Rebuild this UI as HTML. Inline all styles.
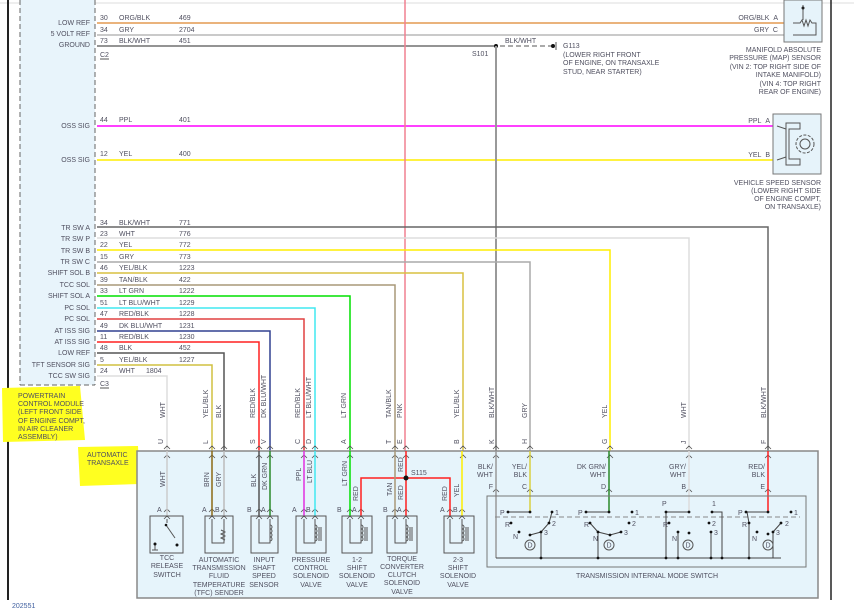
<!DOCTYPE html>
<html><head><meta charset="utf-8"><style>
html,body{margin:0;padding:0;background:#fff;width:854px;height:610px;overflow:hidden}
svg{display:block}
text{font-family:"Liberation Sans",sans-serif;font-size:7px;fill:#505060}
</style></head><body>
<svg width="854" height="610" viewBox="0 0 854 610" xmlns="http://www.w3.org/2000/svg">
<!-- frame -->
<line x1="0" y1="3" x2="854" y2="3" stroke="#ddd"/>
<line x1="8" y1="0" x2="8" y2="600" stroke="#222" stroke-width="2"/>
<line x1="831" y1="0" x2="831" y2="600" stroke="#222" stroke-width="1.5"/>
<!-- PCM box -->
<rect x="20" y="0" width="75" height="385" fill="#e8f4fb"/>
<line x1="20" y1="0" x2="20" y2="385" stroke="#666" stroke-dasharray="5,3"/>
<line x1="95" y1="0" x2="95" y2="385" stroke="#666" stroke-dasharray="5,3"/>
<line x1="20" y1="385" x2="95" y2="385" stroke="#666" stroke-dasharray="5,3"/>
<!-- highlights -->
<path d="M2 388 L80 386 L85 440 L3 442 Z" fill="#ffff20"/>
<path d="M78 447 L138 446 L140 484 L80 486 Z" fill="#ffff20"/>
<text x="18" y="398">POWERTRAIN</text>
<text x="18" y="406">CONTROL MODULE</text>
<text x="18" y="414">(LEFT FRONT SIDE</text>
<text x="18" y="423">OF ENGINE COMPT,</text>
<text x="18" y="431">IN AIR CLEANER</text>
<text x="18" y="439">ASSEMBLY)</text>
<text x="87" y="457">AUTOMATIC</text>
<text x="87" y="465">TRANSAXLE</text>

<!-- top wires -->
<line x1="97" y1="23" x2="790" y2="23" stroke="#e39a50" stroke-width="1.5"/>
<line x1="97" y1="35" x2="790" y2="35" stroke="#aaa" stroke-width="1.2"/>
<line x1="97" y1="46" x2="496" y2="46" stroke="#555" stroke-width="1.2"/>
<line x1="500" y1="46" x2="553" y2="46" stroke="#555" stroke-dasharray="5,3"/>
<circle cx="496" cy="46" r="2" fill="#111"/>
<circle cx="553" cy="46" r="2" fill="#111"/>
<line x1="556" y1="42" x2="556" y2="50" stroke="#555"/>
<text x="505" y="43">BLK/WHT</text>
<text x="472" y="56">S101</text>
<text x="563" y="48">G113</text>
<text x="563" y="57">(LOWER RIGHT FRONT</text>
<text x="563" y="65">OF ENGINE, ON TRANSAXLE</text>
<text x="563" y="74">STUD, NEAR STARTER)</text>
<g text-anchor="end">
<text x="90" y="25">LOW REF</text><text x="90" y="36">5 VOLT REF</text><text x="90" y="47">GROUND</text>
<text x="90" y="128">OSS SIG</text><text x="90" y="162">OSS SIG</text>
</g>
<text x="100" y="20">30</text><text x="119" y="20">ORG/BLK</text><text x="179" y="20">469</text>
<text x="100" y="32">34</text><text x="119" y="32">GRY</text><text x="179" y="32">2704</text>
<text x="100" y="43">73</text><text x="119" y="43">BLK/WHT</text><text x="179" y="43">451</text>
<text x="100" y="57">C2</text><line x1="100" y1="59" x2="109" y2="59" stroke="#555"/>
<line x1="97" y1="126" x2="775" y2="126" stroke="#ff00ff" stroke-width="1.5"/>
<line x1="97" y1="160" x2="775" y2="160" stroke="#ffee00" stroke-width="1.5"/>
<text x="100" y="122">44</text><text x="119" y="122">PPL</text><text x="179" y="122">401</text>
<text x="100" y="156">12</text><text x="119" y="156">YEL</text><text x="179" y="156">400</text>

<!-- MAP sensor -->
<rect x="784" y="0" width="38" height="42" fill="#e6f3fa" stroke="#777"/>
<path d="M793 23 H800 l2-3 2 6 2-6 2 6 2-6 2 3 H816 V35 H793 M803 5 V20" stroke="#555" fill="none"/>
<circle cx="803" cy="8" r="1.5" fill="#222"/>
<g text-anchor="end">
<text x="778" y="20">ORG/BLK&#160;&#160;A</text>
<text x="778" y="32">GRY&#160;&#160;C</text>
<text x="821" y="52">MANIFOLD ABSOLUTE</text>
<text x="821" y="60">PRESSURE (MAP) SENSOR</text>
<text x="821" y="69">(VIN 2: TOP RIGHT SIDE OF</text>
<text x="821" y="77">INTAKE MANIFOLD)</text>
<text x="821" y="86">(VIN 4: TOP RIGHT</text>
<text x="821" y="94">REAR OF ENGINE)</text>
<text x="770" y="123">PPL&#160;&#160;A</text>
<text x="770" y="157">YEL&#160;&#160;B</text>
<text x="821" y="185">VEHICLE SPEED SENSOR</text>
<text x="821" y="193">(LOWER RIGHT SIDE</text>
<text x="821" y="201">OF ENGINE COMPT,</text>
<text x="821" y="209">ON TRANSAXLE)</text>
</g>
<!-- VSS -->
<rect x="773" y="114" width="48" height="60" fill="#e6f3fa" stroke="#777"/>
<path d="M786 123 H800 V129 H789 V159 H800 V165 H786 Z" fill="none" stroke="#555"/>
<circle cx="805" cy="144" r="9" fill="none" stroke="#555" stroke-dasharray="3,1.5"/>
<circle cx="805" cy="144" r="5" fill="none" stroke="#555"/>
<path d="M777 126 l9 3 M777 160 l9-3" stroke="#555"/>

<!-- pink vertical -->
<line x1="405" y1="0" x2="405" y2="451" stroke="#f08090" stroke-width="1.5"/>
<line x1="496" y1="46" x2="496" y2="451" stroke="#999" stroke-width="2"/>

<!-- lower rows -->
<g text-anchor="end">
<text x="90" y="230">TR SW A</text><text x="90" y="241">TR SW P</text><text x="90" y="253">TR SW B</text>
<text x="90" y="264">TR SW C</text><text x="90" y="275">SHIFT SOL B</text><text x="90" y="287">TCC SOL</text>
<text x="90" y="298">SHIFT SOL A</text><text x="90" y="310">PC SOL</text><text x="90" y="321">PC SOL</text>
<text x="90" y="333">AT ISS SIG</text><text x="90" y="344">AT ISS SIG</text><text x="90" y="355">LOW REF</text>
<text x="90" y="367">TFT SENSOR SIG</text><text x="90" y="378">TCC SW SIG</text>
</g>
<g>
<text x="100" y="225">34</text><text x="119" y="225">BLK/WHT</text><text x="179" y="225">771</text>
<text x="100" y="236">23</text><text x="119" y="236">WHT</text><text x="179" y="236">776</text>
<text x="100" y="247">22</text><text x="119" y="247">YEL</text><text x="179" y="247">772</text>
<text x="100" y="259">15</text><text x="119" y="259">GRY</text><text x="179" y="259">773</text>
<text x="100" y="270">46</text><text x="119" y="270">YEL/BLK</text><text x="179" y="270">1223</text>
<text x="100" y="282">39</text><text x="119" y="282">TAN/BLK</text><text x="179" y="282">422</text>
<text x="100" y="293">33</text><text x="119" y="293">LT GRN</text><text x="179" y="293">1222</text>
<text x="100" y="305">51</text><text x="119" y="305">LT BLU/WHT</text><text x="179" y="305">1229</text>
<text x="100" y="316">47</text><text x="119" y="316">RED/BLK</text><text x="179" y="316">1228</text>
<text x="100" y="328">49</text><text x="119" y="328">DK BLU/WHT</text><text x="179" y="328">1231</text>
<text x="100" y="339">11</text><text x="119" y="339">RED/BLK</text><text x="179" y="339">1230</text>
<text x="100" y="350">48</text><text x="119" y="350">BLK</text><text x="179" y="350">452</text>
<text x="100" y="362">5</text><text x="119" y="362">YEL/BLK</text><text x="179" y="362">1227</text>
<text x="100" y="373">24</text><text x="119" y="373">WHT</text><text x="146" y="373">1804</text>
<text x="100" y="386">C3</text><line x1="100" y1="388" x2="109" y2="388" stroke="#555"/>
</g>
<g fill="none" stroke-width="1.5">
<path d="M97 227 H768 V451" stroke="#666"/>
<path d="M97 238 H689 V451" stroke="#ddd"/>
<path d="M97 250 H610 V451" stroke="#ffee00"/>
<path d="M97 262 H530 V451" stroke="#aaa"/>
<path d="M97 273 H463 V451" stroke="#d8c040"/>
<path d="M97 285 H395 V451" stroke="#a89878"/>
<path d="M97 296 H350 V451" stroke="#00e000"/>
<path d="M97 308 H315 V451" stroke="#40e8f0"/>
<path d="M97 319 H304 V451" stroke="#e04040"/>
<path d="M97 331 H270 V451" stroke="#304090"/>
<path d="M97 342 H259 V451" stroke="#ff2020"/>
<path d="M97 353 H224 V451" stroke="#555"/>
<path d="M97 365 H212 V451" stroke="#d0c040"/>
<path d="M97 376 H167 V451" stroke="#ddd"/>
</g>
<!-- rotated wire labels -->
<g>
<text transform="translate(165,418) rotate(-90)">WHT</text>
<text transform="translate(208,418) rotate(-90)">YEL/BLK</text>
<text transform="translate(221,418) rotate(-90)">BLK</text>
<text transform="translate(255,418) rotate(-90)">RED/BLK</text>
<text transform="translate(266,418) rotate(-90)">DK BLU/WHT</text>
<text transform="translate(300,418) rotate(-90)">RED/BLK</text>
<text transform="translate(311,418) rotate(-90)">LT BLU/WHT</text>
<text transform="translate(346,418) rotate(-90)">LT GRN</text>
<text transform="translate(391,418) rotate(-90)">TAN/BLK</text>
<text transform="translate(402,418) rotate(-90)">PNK</text>
<text transform="translate(459,418) rotate(-90)">YEL/BLK</text>
<text transform="translate(494,418) rotate(-90)">BLK/WHT</text>
<text transform="translate(527,418) rotate(-90)">GRY</text>
<text transform="translate(607,418) rotate(-90)">YEL</text>
<text transform="translate(686,418) rotate(-90)">WHT</text>
<text transform="translate(766,418) rotate(-90)">BLK/WHT</text>
<text transform="translate(163,444) rotate(-90)">U</text>
<text transform="translate(208,444) rotate(-90)">L</text>
<text transform="translate(255,444) rotate(-90)">S</text>
<text transform="translate(266,444) rotate(-90)">V</text>
<text transform="translate(300,444) rotate(-90)">C</text>
<text transform="translate(311,444) rotate(-90)">D</text>
<text transform="translate(346,444) rotate(-90)">A</text>
<text transform="translate(391,444) rotate(-90)">T</text>
<text transform="translate(402,444) rotate(-90)">E</text>
<text transform="translate(459,444) rotate(-90)">B</text>
<text transform="translate(494,444) rotate(-90)">K</text>
<text transform="translate(527,444) rotate(-90)">H</text>
<text transform="translate(607,444) rotate(-90)">G</text>
<text transform="translate(686,444) rotate(-90)">J</text>
<text transform="translate(766,444) rotate(-90)">F</text>
</g>
<!-- transaxle box -->
<rect x="137" y="451" width="681" height="147" fill="#e6f4fb" stroke="#888" stroke-width="1.5"/>
<!-- chevrons -->
<g fill="none" stroke="#555" stroke-width="0.8">
<path d="M164 449 l3-3 3 3 M209 449 l3-3 3 3 M221 449 l3-3 3 3 M256 449 l3-3 3 3 M267 449 l3-3 3 3 M301 449 l3-3 3 3 M312 449 l3-3 3 3 M347 449 l3-3 3 3 M392 449 l3-3 3 3 M403 449 l3-3 3 3 M460 449 l3-3 3 3 M493 449 l3-3 3 3 M527 449 l3-3 3 3 M607 449 l3-3 3 3 M686 449 l3-3 3 3 M765 449 l3-3 3 3"/>
<path d="M164 458 l3-3 3 3 M209 458 l3-3 3 3 M221 458 l3-3 3 3 M256 458 l3-3 3 3 M267 458 l3-3 3 3 M301 458 l3-3 3 3 M312 458 l3-3 3 3 M347 458 l3-3 3 3 M392 458 l3-3 3 3 M403 458 l3-3 3 3 M460 458 l3-3 3 3 M493 458 l3-3 3 3 M527 458 l3-3 3 3 M607 458 l3-3 3 3 M686 458 l3-3 3 3 M765 458 l3-3 3 3"/>
<path d="M164 519 l3-3 3 3 M209 519 l3-3 3 3 M221 519 l3-3 3 3 M256 519 l3-3 3 3 M267 519 l3-3 3 3 M301 519 l3-3 3 3 M312 519 l3-3 3 3 M347 519 l3-3 3 3 M358 519 l3-3 3 3 M392 519 l3-3 3 3 M403 519 l3-3 3 3 M447 519 l3-3 3 3 M459 519 l3-3 3 3"/>
<path d="M164 512 l3-3 3 3 M209 512 l3-3 3 3 M221 512 l3-3 3 3 M256 512 l3-3 3 3 M267 512 l3-3 3 3 M301 512 l3-3 3 3 M312 512 l3-3 3 3 M347 512 l3-3 3 3 M358 512 l3-3 3 3 M392 512 l3-3 3 3 M403 512 l3-3 3 3 M447 512 l3-3 3 3 M459 512 l3-3 3 3"/>
<path d="M493 492 l3-3 3 3 M527 492 l3-3 3 3 M606 492 l3-3 3 3 M686 492 l3-3 3 3 M765 492 l3-3 3 3"/>
</g>
<!-- inside wires -->
<g fill="none" stroke-width="1.5">
<path d="M167 451 V516" stroke="#ccc"/>
<path d="M212 451 V516" stroke="#8b6914"/>
<path d="M224 451 V516" stroke="#bbb"/>
<path d="M259 451 V516" stroke="#555"/>
<path d="M270 451 V516" stroke="#2a8a2a"/>
<path d="M304 451 V516" stroke="#e030e0"/>
<path d="M315 451 V516" stroke="#40e8f0"/>
<path d="M350 451 V516" stroke="#00e000"/>
<path d="M361 516 V478 H450 V516" stroke="#ff2020"/>
<path d="M395 451 V516" stroke="#a89878"/>
<path d="M406 451 V516" stroke="#ff2020"/>
<path d="M462 451 V516" stroke="#ffee00"/>
<path d="M496 451 V558" stroke="#999"/>
<path d="M530 451 V512" stroke="#d8d040"/>
<path d="M609 451 V512" stroke="#2a8a2a"/>
<path d="M689 451 V512" stroke="#ddd"/>
<path d="M768 451 V512" stroke="#ff2020"/>
</g>
<circle cx="406" cy="478" r="2.5" fill="#111"/>
<text x="411" y="475">S115</text>
<g>
<text transform="translate(165,487) rotate(-90)">WHT</text>
<text transform="translate(209,487) rotate(-90)">BRN</text>
<text transform="translate(221,487) rotate(-90)">GRY</text>
<text transform="translate(256,487) rotate(-90)">BLK</text>
<text transform="translate(267,490) rotate(-90)">DK GRN</text>
<text transform="translate(301,481) rotate(-90)">PPL</text>
<text transform="translate(312,483) rotate(-90)">LT BLU</text>
<text transform="translate(347,486) rotate(-90)">LT GRN</text>
<text transform="translate(358,501) rotate(-90)">RED</text>
<text transform="translate(392,496) rotate(-90)">TAN</text>
<text transform="translate(403,472) rotate(-90)">RED</text>
<text transform="translate(403,500) rotate(-90)">RED</text>
<text transform="translate(447,501) rotate(-90)">RED</text>
<text transform="translate(459,497) rotate(-90)">YEL</text>
</g>
<g text-anchor="end">
<text x="493" y="469">BLK/</text><text x="493" y="477">WHT</text><text x="493" y="489">F</text>
<text x="527" y="469">YEL/</text><text x="527" y="477">BLK</text><text x="527" y="489">C</text>
<text x="606" y="469">DK GRN/</text><text x="606" y="477">WHT</text><text x="606" y="489">D</text>
<text x="686" y="469">GRY/</text><text x="686" y="477">WHT</text><text x="686" y="489">B</text>
<text x="765" y="469">RED/</text><text x="765" y="477">BLK</text><text x="765" y="489">E</text>
</g>
<!-- pin letters -->
<text x="157" y="512">A</text>
<text x="202" y="512">A</text><text x="215" y="512">B</text>
<text x="247" y="512">B</text><text x="261" y="512">A</text>
<text x="292" y="512">A</text><text x="306" y="512">B</text>
<text x="337" y="512">B</text><text x="352" y="512">A</text>
<text x="383" y="512">B</text><text x="397" y="512">A</text>
<text x="440" y="512">A</text><text x="453" y="512">B</text>
<!-- component boxes -->
<g fill="none" stroke="#555">
<rect x="150" y="516" width="33" height="37"/>
<rect x="205" y="516" width="28" height="37"/>
<rect x="251" y="516" width="27" height="37"/>
<rect x="296" y="516" width="30" height="37"/>
<rect x="342" y="516" width="30" height="37"/>
<rect x="387" y="516" width="30" height="37"/>
<rect x="444" y="516" width="30" height="37"/>
<path d="M167 519 V523 M166 525 L175 538 M155 544 V550 M152 550 H158"/>
<path d="M212 519 V543 H224 V519 M221 530 l4 2 -4 2 4 2 -4 2 4 2"/>
<path d="M259 519 V543 H270 V519 M270 525 a2 2 0 0 1 0 4 a2 2 0 0 1 0 4 a2 2 0 0 1 0 4 a2 2 0 0 1 0 4"/>
<path d="M304 519 V543 H315 V519 M315 525 a2 2 0 0 1 0 4 a2 2 0 0 1 0 4 a2 2 0 0 1 0 4 a2 2 0 0 1 0 4 M319 527 V541 M321 527 V541"/>
<path d="M350 519 V543 H361 V519 M361 525 a2 2 0 0 1 0 4 a2 2 0 0 1 0 4 a2 2 0 0 1 0 4 a2 2 0 0 1 0 4 M365 527 V541 M367 527 V541"/>
<path d="M395 519 V543 H406 V519 M406 525 a2 2 0 0 1 0 4 a2 2 0 0 1 0 4 a2 2 0 0 1 0 4 a2 2 0 0 1 0 4 M410 527 V541 M412 527 V541"/>
<path d="M450 519 V543 H462 V519 M462 525 a2 2 0 0 1 0 4 a2 2 0 0 1 0 4 a2 2 0 0 1 0 4 a2 2 0 0 1 0 4 M466 527 V541 M468 527 V541"/>
</g>
<circle cx="155" cy="544" r="1.5" fill="#111"/><circle cx="166" cy="525" r="1.3" fill="#111"/><circle cx="177" cy="545" r="1.5" fill="#111"/>
<g text-anchor="middle">
<text x="167" y="560">TCC</text><text x="167" y="568">RELEASE</text><text x="167" y="577">SWITCH</text>
<text x="219" y="562">AUTOMATIC</text><text x="219" y="570">TRANSMISSION</text><text x="219" y="578">FLUID</text><text x="219" y="587">TEMPERATURE</text><text x="219" y="595">(TFC) SENDER</text>
<text x="264" y="562">INPUT</text><text x="264" y="570">SHAFT</text><text x="264" y="578">SPEED</text><text x="264" y="587">SENSOR</text>
<text x="311" y="562">PRESSURE</text><text x="311" y="570">CONTROL</text><text x="311" y="578">SOLENOID</text><text x="311" y="587">VALVE</text>
<text x="357" y="562">1-2</text><text x="357" y="570">SHIFT</text><text x="357" y="578">SOLENOID</text><text x="357" y="587">VALVE</text>
<text x="402" y="561">TORQUE</text><text x="402" y="569">CONVERTER</text><text x="402" y="577">CLUTCH</text><text x="402" y="585">SOLENOID</text><text x="402" y="594">VALVE</text>
<text x="458" y="562">2-3</text><text x="458" y="570">SHIFT</text><text x="458" y="578">SOLENOID</text><text x="458" y="587">VALVE</text>
<text x="647" y="578">TRANSMISSION INTERNAL MODE SWITCH</text>
</g>
<!-- mode switch -->
<rect x="487" y="496" width="319" height="71" fill="none" stroke="#777"/>
<line x1="495" y1="517" x2="800" y2="517" stroke="#888" stroke-dasharray="5,3"/>
<g fill="none" stroke="#444">
<path d="M496 558 H781"/>
<path d="M508 512 H530 M552 512 L549 523 L541 532 L530 535 M541 532 V558"/>
<path d="M586 512 H609 M511 523" />
<path d="M590 523 L598 532 L610 535 L621 532 M598 532 V558"/>
<path d="M666 512 H689 M666 512 V558 M678 532 V558 M711 532 V558 M712 512 H722 V558"/>
<path d="M746 512 H768 M747 512 L749 523 V558 M781 523 L773 532 V558"/>
</g>
<g fill="#111">
<circle cx="508" cy="512" r="1.4"/><circle cx="530" cy="512" r="1.4"/><circle cx="552" cy="512" r="1.4"/><circle cx="549" cy="523" r="1.4"/><circle cx="541" cy="532" r="1.4"/><circle cx="530" cy="535" r="1.4"/><circle cx="511" cy="523" r="1.4"/><circle cx="519" cy="532" r="1.4"/><circle cx="541" cy="558" r="1.4"/>
<circle cx="586" cy="512" r="1.4"/><circle cx="609" cy="512" r="1.4"/><circle cx="632" cy="512" r="1.4"/><circle cx="629" cy="523" r="1.4"/><circle cx="590" cy="523" r="1.4"/><circle cx="598" cy="532" r="1.4"/><circle cx="610" cy="535" r="1.4"/><circle cx="621" cy="532" r="1.4"/><circle cx="598" cy="558" r="1.4"/>
<circle cx="666" cy="512" r="1.4"/><circle cx="689" cy="512" r="1.4"/><circle cx="712" cy="512" r="1.4"/><circle cx="709" cy="523" r="1.4"/><circle cx="669" cy="523" r="1.4"/><circle cx="678" cy="532" r="1.4"/><circle cx="689" cy="533" r="1.4"/><circle cx="711" cy="532" r="1.4"/><circle cx="666" cy="558" r="1.4"/><circle cx="678" cy="558" r="1.4"/><circle cx="711" cy="558" r="1.4"/><circle cx="722" cy="558" r="1.4"/>
<circle cx="746" cy="512" r="1.4"/><circle cx="768" cy="512" r="1.4"/><circle cx="791" cy="512" r="1.4"/><circle cx="749" cy="523" r="1.4"/><circle cx="781" cy="523" r="1.4"/><circle cx="757" cy="532" r="1.4"/><circle cx="768" cy="534" r="1.4"/><circle cx="773" cy="532" r="1.4"/><circle cx="749" cy="558" r="1.4"/>
</g>
<g font-size="7">
<text x="500" y="515">P</text><text x="555" y="515">1</text><text x="552" y="526">2</text><text x="544" y="535">3</text><text x="505" y="527">R</text><text x="513" y="539">N</text>
<text x="578" y="515">P</text><text x="635" y="515">1</text><text x="632" y="526">2</text><text x="624" y="535">3</text><text x="584" y="527">R</text><text x="593" y="541">N</text>
<text x="662" y="506">P</text><text x="712" y="506">1</text><text x="712" y="526">2</text><text x="714" y="535">3</text><text x="663" y="527">R</text><text x="672" y="541">N</text>
<text x="738" y="515">P</text><text x="794" y="515">1</text><text x="785" y="526">2</text><text x="776" y="535">3</text><text x="742" y="527">R</text><text x="752" y="541">N</text>
</g>
<g fill="none" stroke="#555"><circle cx="530" cy="545" r="5"/><circle cx="609" cy="545" r="5"/><circle cx="688" cy="545" r="5"/><circle cx="768" cy="545" r="5"/></g>
<g text-anchor="middle" font-size="6.5"><text x="530" y="547.5">D</text><text x="609" y="547.5">D</text><text x="688" y="547.5">D</text><text x="768" y="547.5">D</text></g>
<text x="12" y="608" font-size="7" style="fill:#4060a0">202551</text>
</svg>
</body></html>
